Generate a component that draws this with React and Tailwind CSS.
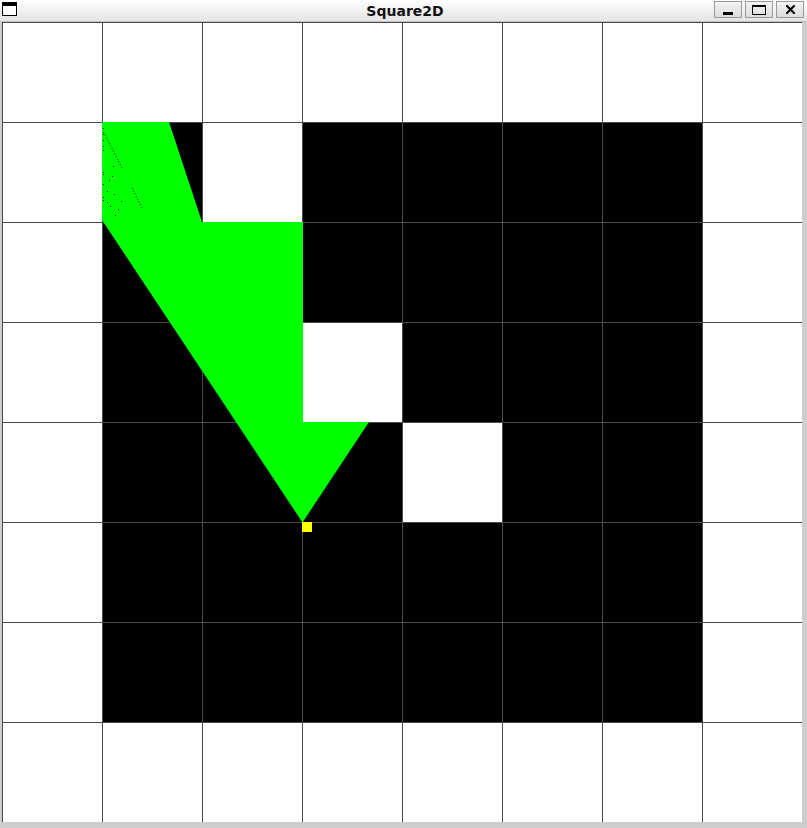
import React from "react";

const blackCells = [];
for (let r = 1; r <= 6; r++) {
  for (let c = 1; c <= 6; c++) {
    const white = (r === 1 && c === 2) || (r === 3 && c === 3) || (r === 4 && c === 4);
    if (!white) blackCells.push([c, r]);
  }
}

const dots = [
  [101, 106], [101, 112], [101, 118], [101, 124], [101, 128], [101, 150], [101, 152], [101, 162], [101, 175], [101, 178],
  [107, 158], [110, 154], [111, 144], [105, 169], [108, 184], [105, 180], [113, 193], [116, 187], [112, 172], [119, 179],
];

function Canvas() {
  const lines = [];
  for (let i = 0; i < 8; i++) {
    lines.push(<line key={"v" + i} x1={i * 100 + 0.5} y1={0} x2={i * 100 + 0.5} y2={800} stroke="#4a4a4a" strokeWidth="1" />);
    lines.push(<line key={"h" + i} x1={0} y1={i * 100 + 0.5} x2={800} y2={i * 100 + 0.5} stroke="#4a4a4a" strokeWidth="1" />);
  }
  return (
    <svg width="800" height="800" viewBox="0 0 800 800" className="block" shapeRendering="crispEdges">
      <rect x="0" y="0" width="800" height="800" fill="#ffffff" />
      {blackCells.map(([c, r]) => (
        <rect key={c + "-" + r} x={c * 100} y={r * 100} width="100" height="100" fill="#000000" />
      ))}
      {lines}
      <polygon
        points="100,100 167,100 200,200 301,200 301,400 367,400 300.5,500.5 100,198"
        fill="#00ff00"
        shapeRendering="auto"
      />
      <line x1="101.5" y1="110" x2="120.5" y2="147" stroke="#000" strokeWidth="1" strokeDasharray="1 2" shapeRendering="auto" />
      <line x1="130" y1="166" x2="140" y2="186" stroke="#000" strokeWidth="1" strokeDasharray="1 2" shapeRendering="auto" />
      {dots.map(([x, y], i) => (
        <rect key={i} x={x} y={y} width="1" height="1" fill="#000" />
      ))}
      <rect x="300" y="500" width="10" height="10" fill="#ffff00" />
    </svg>
  );
}

function Btn({ children }) {
  return (
    <div className="relative w-[28px] h-[17px] border border-[#9a9a9a] bg-[linear-gradient(#f4f4f4,#dcdcdc)]">
      {children}
    </div>
  );
}

export default function App() {
  return (
    <div className="w-[807px] h-[828px] bg-[#cdcdcd] flex flex-col overflow-hidden" style={{ fontFamily: '"DejaVu Sans", sans-serif' }}>
      <div className="relative h-[21px] bg-[linear-gradient(#ffffff,#e4e4e4)] flex items-center">
        <div className="absolute left-[2px] top-[2px] w-[15px] h-[14px] border border-black bg-white border-t-[4px]" />
        <div className="flex-1 text-center text-[14px] font-bold text-[#111111] leading-none pt-[1px] pl-[3px]">Square2D</div>
        <div className="absolute left-[714px] top-[1px] flex gap-[3px]">
          <Btn>
            <div className="absolute left-[8px] top-[10px] w-[10px] h-[3px] bg-black" />
          </Btn>
          <Btn>
            <div className="absolute left-[6px] top-[3px] w-[14px] h-[10px] border border-black border-t-2" />
          </Btn>
          <Btn>
            <svg className="absolute left-[9px] top-[3px]" width="9" height="9" viewBox="0 0 9 9">
              <path d="M1 1 L8 8 M8 1 L1 8" stroke="#000" strokeWidth="2.2" strokeLinecap="square" fill="none" />
            </svg>
          </Btn>
        </div>
      </div>
      <div className="h-[1px] bg-[#c4c4c4]" />
      <div className="pl-[2px]">
        <Canvas />
      </div>
    </div>
  );
}
